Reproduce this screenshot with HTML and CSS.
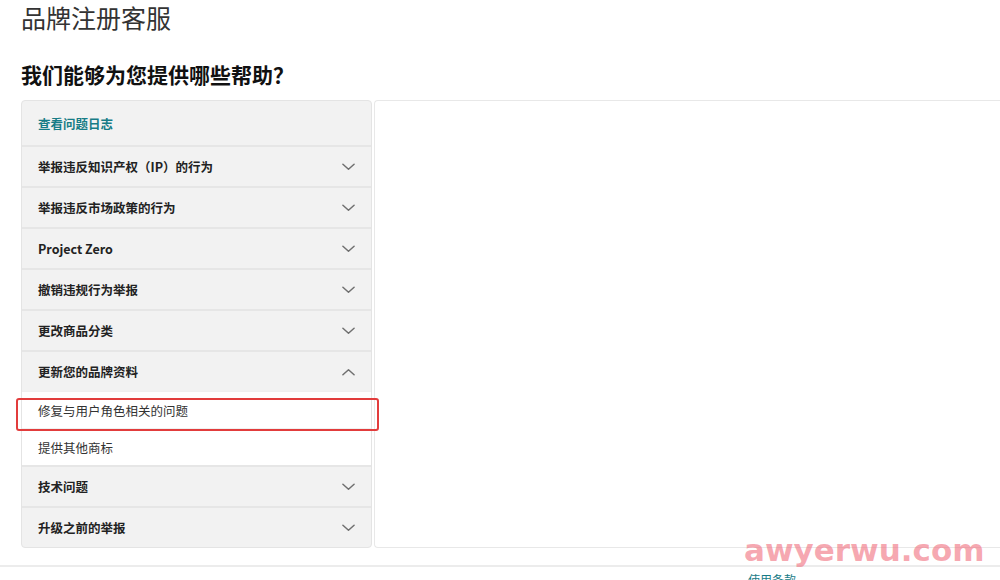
FILE: index.html
```html
<!DOCTYPE html>
<html lang="zh-CN">
<head>
<meta charset="utf-8">
<title>品牌注册客服</title>
<link rel="stylesheet" href="styles.css">
</head>
<body>
<div class="page">
  <h1 class="title">品牌注册客服</h1>
  <h2 class="heading">我们能够为您提供哪些帮助？</h2>
  <div class="panels">
    <div class="menu">
      <div class="row first"><a class="link">查看问题日志</a></div>
      <div class="row"><span>举报违反知识产权（IP）的行为</span><svg class="chev" viewBox="0 0 14 8"><path d="M1 1l6 5.5L13 1"/></svg></div>
      <div class="row"><span>举报违反市场政策的行为</span><svg class="chev" viewBox="0 0 14 8"><path d="M1 1l6 5.5L13 1"/></svg></div>
      <div class="row"><span>Project Zero</span><svg class="chev" viewBox="0 0 14 8"><path d="M1 1l6 5.5L13 1"/></svg></div>
      <div class="row"><span>撤销违规行为举报</span><svg class="chev" viewBox="0 0 14 8"><path d="M1 1l6 5.5L13 1"/></svg></div>
      <div class="row"><span>更改商品分类</span><svg class="chev" viewBox="0 0 14 8"><path d="M1 1l6 5.5L13 1"/></svg></div>
      <div class="row"><span>更新您的品牌资料</span><svg class="chev" viewBox="0 0 14 8"><path d="M1 7l6-5.5L13 7"/></svg></div>
      <div class="sub">修复与用户角色相关的问题</div>
      <div class="sub">提供其他商标</div>
      <div class="row"><span>技术问题</span><svg class="chev" viewBox="0 0 14 8"><path d="M1 1l6 5.5L13 1"/></svg></div>
      <div class="row"><span>升级之前的举报</span><svg class="chev" viewBox="0 0 14 8"><path d="M1 1l6 5.5L13 1"/></svg></div>
    </div>
    <div class="content"></div>
  </div>
  <div class="footer"><a class="foot-link">使用条款</a></div>
  <div class="highlight"></div>
  <div class="watermark">awyerwu.com</div>
</div>
</body>
</html>
```

FILE: styles.css
```css
* { box-sizing: border-box; }
html, body { margin: 0; padding: 0; background: #fff; }
body {
  font-family: "Noto Sans CJK SC", "Noto Sans", sans-serif;
  color: #222;
  width: 1000px;
  height: 580px;
  overflow: hidden;
}
.page {
  position: relative;
  height: 580px;
  overflow: hidden;
}
.title {
  margin: 0;
  padding: 1px 0 0 21px;
  font-size: 25px;
  line-height: 32px;
  font-weight: 400;
  color: #333;
}
.heading {
  margin: 26px 0 0;
  padding: 0 0 0 21px;
  font-size: 21px;
  line-height: 30px;
  font-weight: 700;
  color: #111;
}
.panels {
  display: flex;
  align-items: stretch;
  gap: 2px;
  margin: 11px 0 0 21px;
}
.menu {
  width: 351px;
  flex: none;
  background: #f2f2f2;
  border: 1px solid #e4e4e4;
  border-radius: 4px;
  overflow: hidden;
}
.row {
  height: 41px;
  display: flex;
  align-items: center;
  justify-content: space-between;
  padding: 0 16px 0 16px;
  border-top: 2px solid #e6e6e6;
  font-size: 12.5px;
  font-weight: 700;
  color: #222;
}
.row.first {
  height: 44px;
  border-top: none;
}
.link {
  color: #177c86;
  font-weight: 700;
}
.chev {
  width: 13px;
  height: 8px;
}
.chev path {
  fill: none;
  stroke: #707070;
  stroke-width: 1.6;
  stroke-linecap: round;
  stroke-linejoin: round;
}
.sub {
  height: 37px;
  display: flex;
  align-items: center;
  padding-left: 16px;
  background: #fff;
  font-size: 12.5px;
  color: #333;
  border-top: 1px solid #f0f0f0;
}
.content {
  flex: 1;
  background: #fff;
  border: 1px solid #e8e8e8;
  border-right: none;
  border-radius: 4px 0 0 4px;
}
.footer {
  margin-top: 17px;
  border-top: 2px solid #ececec;
  padding: 4px 0 0 748px;
  font-size: 12px;
}
.foot-link {
  color: #177c86;
}
.highlight {
  position: absolute;
  left: 16px;
  top: 398px;
  width: 363px;
  height: 33px;
  border: 2px solid #e23c3c;
  border-radius: 3px;
}
.watermark {
  position: absolute;
  left: 744px;
  top: 532px;
  font-family: "DejaVu Sans", sans-serif;
  font-weight: 700;
  font-size: 31px;
  letter-spacing: 0;
  color: rgba(240, 110, 125, 0.6);
}
```
